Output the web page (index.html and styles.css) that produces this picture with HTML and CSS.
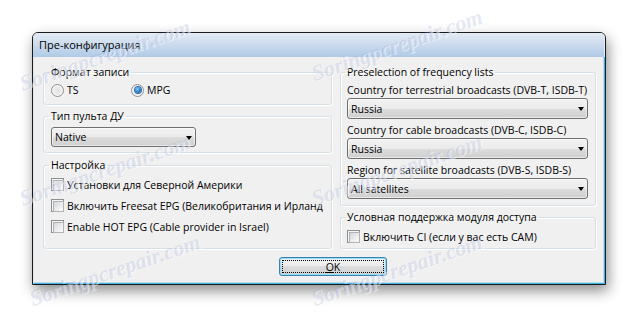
FILE: index.html
```html
<!DOCTYPE html>
<html lang="ru">
<head>
<meta charset="utf-8">
<title>Пре-конфигурация</title>
<link rel="stylesheet" href="styles.css">
</head>
<body>
<div class="stage">
  <div class="window">
    <div class="titlebar">Пре-конфигурация</div>
    <div class="client">
      <div class="columns">
        <div class="col col-left">
          <fieldset class="group g-format">
            <legend>Формат записи</legend>
            <div class="radios">
              <div class="radio r-ts"><span class="rb"></span><span>TS</span></div>
              <div class="radio"><span class="rb on"></span><span>MPG</span></div>
            </div>
          </fieldset>
          <fieldset class="group g-remote">
            <legend>Тип пульта ДУ</legend>
            <div class="combo combo-small"><span class="ctext">Native</span><span class="arrow"></span></div>
          </fieldset>
          <fieldset class="group g-setup">
            <legend>Настройка</legend>
            <div class="check"><span class="cb"></span><span>Установки для Северной Америки</span></div>
            <div class="check"><span class="cb"></span><span>Включить Freesat EPG (Великобритания и Ирланд</span></div>
            <div class="check"><span class="cb"></span><span>Enable HOT EPG (Cable provider in Israel)</span></div>
          </fieldset>
        </div>
        <div class="col col-right">
          <fieldset class="group g-presel">
            <legend>Preselection of frequency lists</legend>
            <div class="field">
              <div class="flabel">Country for terrestrial broadcasts (DVB-T, ISDB-T)</div>
              <div class="combo"><span class="ctext">Russia</span><span class="arrow"></span></div>
            </div>
            <div class="field">
              <div class="flabel">Country for cable broadcasts (DVB-C, ISDB-C)</div>
              <div class="combo"><span class="ctext">Russia</span><span class="arrow"></span></div>
            </div>
            <div class="field">
              <div class="flabel">Region for satellite broadcasts (DVB-S, ISDB-S)</div>
              <div class="combo"><span class="ctext">All satellites</span><span class="arrow"></span></div>
            </div>
          </fieldset>
          <fieldset class="group g-ci">
            <legend>Условная поддержка модуля доступа</legend>
            <div class="check"><span class="cb"></span><span>Включить CI (если у вас есть CAM)</span></div>
          </fieldset>
        </div>
      </div>
      <div class="footer">
        <div class="btn"><span><span class="u">O</span>K</span></div>
      </div>
    </div>
  </div>
</div>

<div class="wm wm1">Soringpcrepair.com</div>
<div class="wm wm2">Soringpcrepair.com</div>
<div class="wm wm3">Soringpcrepair.com</div>
<div class="wm wm4">Soringpcrepair.com</div>
<div class="wm wm5">Soringpcrepair.com</div>
<div class="wm wm6">Soringpcrepair.com</div>
</body>
</html>
```

FILE: styles.css
```css
* { box-sizing: border-box; }

html, body {
  margin: 0;
  padding: 0;
  background: #ffffff;
}

body {
  width: 638px;
  height: 317px;
  overflow: hidden;
  position: relative;
  font-family: "Open Sans", "Noto Sans", "DejaVu Sans", sans-serif;
  font-size: 10.5px;
  color: #000;
}

.stage {
  padding: 32px 0 0 32px;
}

.window {
  width: 574px;
  height: 253px;
  border: 1px solid #1b1b1b;
  border-radius: 6px 6px 0 0;
  background: #f0f0f0;
  box-shadow: 2px 6px 14px rgba(0, 0, 0, 0.45);
  display: flex;
  flex-direction: column;
  overflow: hidden;
}

.titlebar {
  height: 24px;
  flex: none;
  line-height: 24px;
  padding-left: 6px;
  font-size: 11px;
  background: linear-gradient(#e3ebf5 0%, #cddcee 45%, #afcae7 100%);
  border-right: 1px solid #dfeaf6;
}

.client {
  flex: 1;
  border-left: 1px solid #dde8f3;
  border-right: 1px solid #3fb4e4;
  border-bottom: 1px solid #3fb4e4;
  box-shadow: inset 0 -1px 0 #b8dbee, inset -1px 0 0 #b8dbee;
  padding: 8px 8px 0 9px;
  background: #f0f0f0;
}

.columns {
  display: flex;
  gap: 8px;
}

.col-left { width: 289px; }
.col-right { width: 256px; }

.group {
  margin: 0;
  min-width: 0;
  border: 1px solid #d5dfe5;
  border-radius: 3px;
  box-shadow: inset 1px 1px 0 #ffffff, 1px 1px 0 #ffffff;
}

.group legend {
  padding: 0 2px;
  margin-left: -2px;
  line-height: 14px;
  height: 14px;
  white-space: nowrap;
}

.col-left .group { padding: 0 2px 0 7px; }
.col-right .group { padding: 0 7px 0 6px; }

.g-format { padding-top: 4px !important; padding-bottom: 7px !important; }
.g-remote { margin-top: 4px !important; padding-top: 4px !important; padding-bottom: 5px !important; }
.g-setup { margin-top: 5px !important; padding-top: 2px !important; padding-bottom: 11px !important; }
.g-presel { padding-top: 4px !important; padding-bottom: 6px !important; }
.g-ci { margin-top: 4px !important; padding-top: 2px !important; padding-bottom: 1px !important; }

.radios {
  display: flex;
  height: 14px;
  align-items: center;
}

.radio {
  display: flex;
  align-items: center;
  gap: 3px;
}

.r-ts { width: 80px; }

.rb {
  width: 13px;
  height: 13px;
  flex: none;
  border-radius: 50%;
  border: 1px solid #8d9196;
  background: radial-gradient(circle at 55% 55%, #e2e2e2 0%, #ececec 45%, #fafafa 100%);
  box-shadow: inset 0 0 0 1px #f7f7f7;
  display: flex;
  align-items: center;
  justify-content: center;
}

.rb.on::after {
  content: "";
  width: 6px;
  height: 6px;
  border-radius: 50%;
  background: radial-gradient(circle at 40% 35%, #8fd3f8 0%, #2f8ad6 45%, #0e4e98 100%);
  box-shadow: 0 0 0 1px #3d6f9e;
}

.check {
  display: flex;
  align-items: center;
  gap: 3px;
  height: 21px;
  white-space: nowrap;
  overflow: hidden;
}

.cb {
  width: 13px;
  height: 13px;
  flex: none;
  border: 1px solid #8e8f8f;
  background: #f4f4f4;
  padding: 1px;
}

.cb::after {
  content: "";
  display: block;
  width: 100%;
  height: 100%;
  border: 1px solid #b0b4b9;
  background: linear-gradient(135deg, #d3d6da 0%, #eeeeee 60%, #fbfbfb 100%);
}

.combo {
  height: 21px;
  border: 1px solid #707070;
  border-radius: 3px;
  background: linear-gradient(#f2f2f2 0%, #ebebeb 50%, #dddddd 50%, #cfcfcf 100%);
  box-shadow: inset 0 0 0 1px rgba(255, 255, 255, 0.55);
  display: flex;
  align-items: center;
  padding-left: 3px;
  white-space: nowrap;
}

.combo-small {
  width: 145px;
  height: 20px;
}

.ctext { flex: 1; }

.arrow {
  flex: none;
  width: 0;
  height: 0;
  margin-right: 3px;
  margin-top: 1px;
  border-top: 4px solid #000;
  border-left: 3.5px solid transparent;
  border-right: 3.5px solid transparent;
}

.field { margin-bottom: 4px; }
.field:last-child { margin-bottom: 0; }

.flabel {
  height: 15px;
  line-height: 15px;
  white-space: nowrap;
}

.footer {
  padding: 8px 0 0 236px;
}

.btn {
  width: 108px;
  height: 19px;
  border: 1px solid #3c7fb1;
  border-radius: 3px;
  background: linear-gradient(#f2f2f2 0%, #ebebeb 50%, #dddddd 50%, #cfcfcf 100%);
  box-shadow: inset 0 0 0 1px #8ee0fa;
  outline: 1px dotted #000;
  outline-offset: -4px;
  display: flex;
  align-items: center;
  justify-content: center;
  line-height: 14px;
}

.u { text-decoration: underline; }

.wm {
  position: absolute;
  font-family: "Liberation Serif", serif;
  font-style: italic;
  font-weight: bold;
  font-size: 22px;
  line-height: 22px;
  color: rgba(120, 140, 200, 0.2);
  text-shadow: 1px 1px 0 rgba(255, 255, 255, 0.5);
  transform-origin: 0 100%;
  transform: rotate(-19deg);
  white-space: nowrap;
  pointer-events: none;
}

.wm1 { left: 24px; top: 73px; }
.wm2 { left: 24px; top: 188px; }
.wm3 { left: 34px; top: 288px; }
.wm4 { left: 316px; top: 63px; }
.wm5 { left: 316px; top: 188px; }
.wm6 { left: 316px; top: 288px; }
```
